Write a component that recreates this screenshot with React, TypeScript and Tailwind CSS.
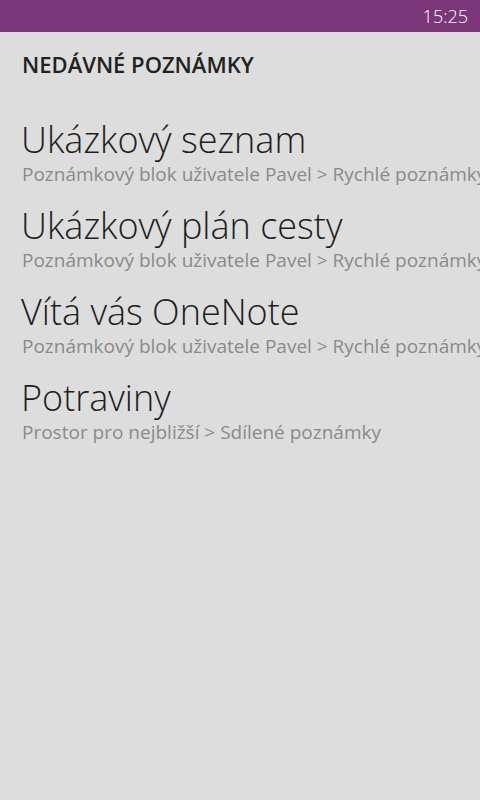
import React from "react";

const notes = [
  { title: "Ukázkový seznam", path: "Poznámkový blok uživatele Pavel > Rychlé poznámky" },
  { title: "Ukázkový plán cesty", path: "Poznámkový blok uživatele Pavel > Rychlé poznámky" },
  { title: "Vítá vás OneNote", path: "Poznámkový blok uživatele Pavel > Rychlé poznámky" },
  { title: "Potraviny", path: "Prostor pro nejbližší > Sdílené poznámky" },
];

const App = () => {
  return (
    <div className="w-[480px] h-[800px] bg-[#dddddd] overflow-hidden font-['Open_Sans',sans-serif]">
      {/* status bar */}
      <div className="h-8 bg-[#7b367a] flex items-center justify-end pr-3">
        <span className="text-[18px] font-light text-white leading-none">15:25</span>
      </div>

      <div className="pl-[22px] pt-[18px]">
        <h1 className="text-[22px] leading-7 font-semibold text-[#222222]">NEDÁVNÉ POZNÁMKY</h1>

        <div className="mt-[42px] flex flex-col">
          {notes.map((note, i) => (
            <div key={i} className="pb-5 whitespace-nowrap">
              <div className="text-[36px] leading-10 font-light text-[#1e1e1e] -ml-[1px]">{note.title}</div>
              <div className="mt-[2px] text-[19px] leading-6 text-[#8a8a8a]">{note.path}</div>
            </div>
          ))}
        </div>
      </div>
    </div>
  );
};

export default App;
